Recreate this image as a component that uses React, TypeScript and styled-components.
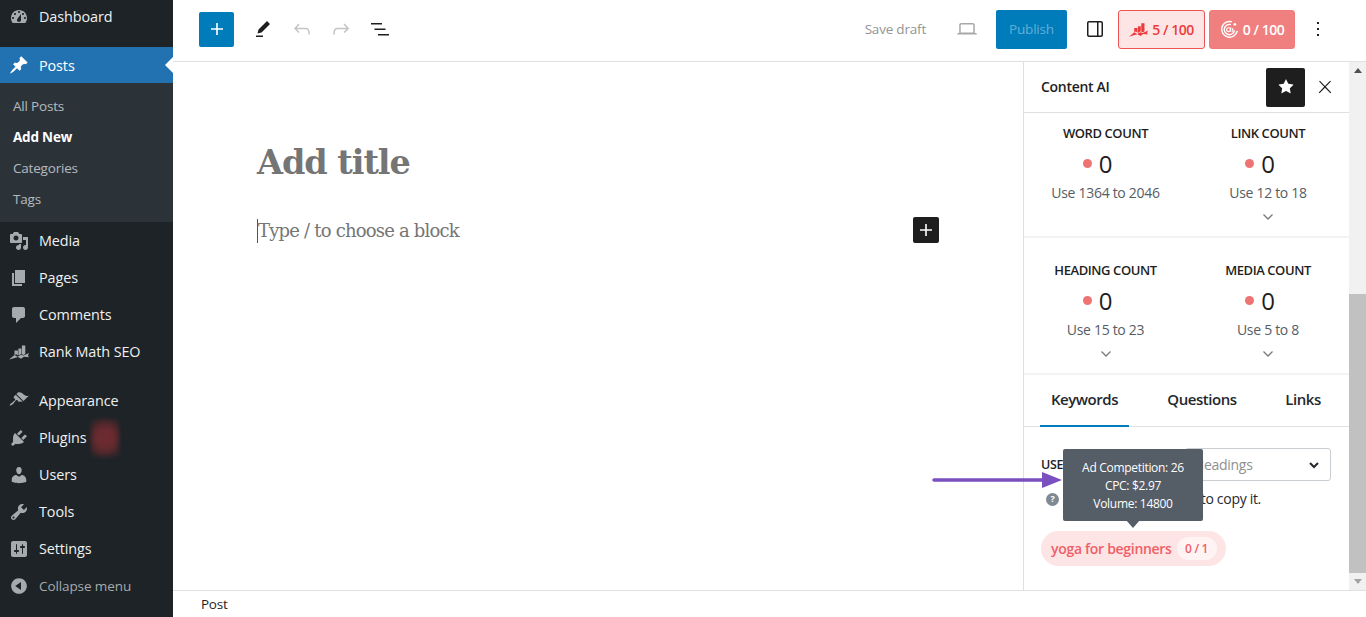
import React from 'react';
import styled, { createGlobalStyle } from 'styled-components';

const font = `'Open Sans', 'Noto Sans', sans-serif`;

const GlobalStyle = createGlobalStyle`
  html, body {
    margin: 0;
    height: 100%;
    overflow: hidden;
    background: #fff;
    font-family: ${font};
  }
  #root {
    height: 100%;
  }
  * {
    box-sizing: border-box;
  }
`;

const Page = styled.div`
  display: flex;
  width: 1366px;
  height: 617px;
  overflow: hidden;
  position: relative;
`;

/* admin menu */
const Sidebar = styled.nav`
  width: 173px;
  flex-shrink: 0;
  background: #1d2327;
  display: flex;
  flex-direction: column;
`;

const MenuItem = styled.div<{ $active?: boolean; $gap?: number; $muted?: boolean; $h?: number }>`
  display: flex;
  align-items: center;
  height: ${({ $h }) => $h ?? 37}px;
  margin-top: ${({ $gap }) => $gap ?? 0}px;
  padding-left: 9px;
  gap: 10px;
  position: relative;
  font-size: ${({ $muted }) => ($muted ? 13.5 : 14.4)}px;
  letter-spacing: -0.1px;
  color: ${({ $active, $muted }) => ($active ? '#fff' : $muted ? '#a7aaad' : '#f0f0f1')};
  background: ${({ $active }) => ($active ? '#2271b1' : 'transparent')};

  svg {
    width: 20px;
    height: 20px;
    fill: ${({ $active }) => ($active ? '#fff' : '#a7aaad')};
    flex-shrink: 0;
  }
`;

const ActiveNotch = styled.span`
  position: absolute;
  right: 0;
  top: 50%;
  margin-top: -8px;
  border: 8px solid transparent;
  border-left-width: 0;
  border-right-color: #fff;
`;

const SubMenu = styled.div`
  background: #2c3338;
  height: 139px;
  padding-top: 8px;
  display: flex;
  flex-direction: column;
`;

const SubItem = styled.div<{ $current?: boolean }>`
  height: 30.75px;
  display: flex;
  align-items: center;
  padding-left: 13px;
  font-size: 13.5px;
  letter-spacing: -0.2px;
  font-weight: ${({ $current }) => ($current ? 700 : 400)};
  color: ${({ $current }) => ($current ? '#fff' : 'rgba(240, 246, 252, 0.7)')};
`;

const BlurredBadge = styled.span`
  width: 28px;
  height: 38px;
  margin-left: -6px;
  background: radial-gradient(circle, #6b2b30 35%, #54282c 60%, #1d2327 100%);
  filter: blur(2px);
`;

/* editor */
const Main = styled.div`
  flex: 1;
  min-width: 0;
  display: flex;
  flex-direction: column;
`;

const TopBar = styled.header`
  height: 62px;
  flex-shrink: 0;
  border-bottom: 1px solid #e0e0e0;
  display: flex;
  align-items: center;
  padding: 0 29px 3px 26px;
`;

const InserterButton = styled.button`
  width: 35px;
  height: 35px;
  margin-right: 9px;
  border: none;
  border-radius: 2px;
  background: #007cba;
  padding: 0;
  display: flex;
  align-items: center;
  justify-content: center;

  svg {
    width: 24px;
    height: 24px;
    fill: #fff;
  }
`;

const IconButton = styled.button<{ $color?: string; $size?: number; $left?: number }>`
  width: 39px;
  height: 36px;
  margin-left: ${({ $left }) => $left ?? 0}px;
  border: none;
  background: none;
  padding: 0;
  display: flex;
  align-items: center;
  justify-content: center;

  svg {
    width: ${({ $size }) => $size ?? 24}px;
    height: ${({ $size }) => $size ?? 24}px;
    fill: ${({ $color }) => $color ?? '#1e1e1e'};
  }
`;

const RightTools = styled.div`
  margin-left: auto;
  display: flex;
  align-items: center;
`;

const SaveDraft = styled.span`
  font-size: 13.5px;
  letter-spacing: -0.2px;
  color: #949494;
  margin-right: 21px;
`;

const PublishButton = styled.button`
  width: 71px;
  height: 39px;
  margin: 0 8px 0 10px;
  border: none;
  border-radius: 2px;
  background: #007cba;
  color: rgba(255, 255, 255, 0.4);
  font-family: ${font};
  font-size: 13.5px;
  letter-spacing: -0.2px;
  padding: 0;
`;

const ScoreButton = styled.div<{ $filled?: boolean; $w: number }>`
  width: ${({ $w }) => $w}px;
  height: 39px;
  margin-left: 4px;
  border-radius: 3px;
  border: 1px solid ${({ $filled }) => ($filled ? '#ef7b7b' : '#ee5353')};
  background: ${({ $filled }) => ($filled ? '#f08080' : '#fde5e5')};
  color: ${({ $filled }) => ($filled ? '#fff' : '#ee3b3b')};
  font-size: 14px;
  font-weight: 600;
  letter-spacing: -0.45px;
  display: flex;
  align-items: center;
  justify-content: center;
  gap: 4px;
`;

const Body = styled.div`
  flex: 1;
  min-height: 0;
  display: flex;
`;

const Canvas = styled.div`
  flex: 1;
  min-width: 0;
  padding: 78px 84px 0 84px;
`;

const PostTitle = styled.h1`
  margin: 0;
  font-family: 'DejaVu Serif', 'Liberation Serif', serif;
  font-size: 33.5px;
  line-height: 46px;
  letter-spacing: -1.05px;
  font-weight: 700;
  color: #757575;
`;

const BlockRow = styled.div`
  display: flex;
  align-items: center;
  justify-content: space-between;
  margin-top: 31px;
`;

const Placeholder = styled.div`
  font-family: 'DejaVu Serif', 'Liberation Serif', serif;
  font-size: 18px;
  letter-spacing: -0.8px;
  color: #757575;
  border-left: 1px solid #555;
  line-height: 24px;
`;

const BlockAdd = styled.button`
  width: 26px;
  height: 26px;
  margin-bottom: 2px;
  border: none;
  border-radius: 2px;
  background: #1e1e1e;
  padding: 0;
  display: flex;
  align-items: center;
  justify-content: center;

  svg {
    width: 24px;
    height: 24px;
    fill: #fff;
  }
`;

/* content ai panel */
const Panel = styled.aside`
  width: 326px;
  flex-shrink: 0;
  border-left: 1px solid #e0e0e0;
  display: flex;
  flex-direction: column;
  position: relative;
`;

const PanelHeader = styled.div`
  height: 51px;
  flex-shrink: 0;
  border-bottom: 1px solid #e0e0e0;
  display: flex;
  align-items: center;
  padding: 0 5px 0 17px;
`;

const PanelTitle = styled.span`
  margin-bottom: 2px;
  font-size: 14px;
  font-weight: 600;
  letter-spacing: -0.3px;
  color: #1e1e1e;
`;

const StarButton = styled.button`
  width: 39px;
  height: 39px;
  margin-left: auto;
  border: none;
  border-radius: 2px;
  background: #1e1e1e;
  padding: 0;
  display: flex;
  align-items: center;
  justify-content: center;

  svg {
    width: 24px;
    height: 24px;
    fill: #fff;
  }
`;

const StatGrid = styled.div<{ $h: number; $top: number }>`
  height: ${({ $h }) => $h}px;
  flex-shrink: 0;
  padding-top: ${({ $top }) => $top}px;
  border-bottom: 2px solid #f3f3f3;
  display: grid;
  grid-template-columns: 163px 162px;
`;

const Stat = styled.div`
  display: flex;
  flex-direction: column;
  align-items: center;
`;

const StatLabel = styled.div`
  font-size: 13px;
  line-height: 18px;
  font-weight: 600;
  letter-spacing: -0.42px;
  color: #1e1e1e;
`;

const StatValue = styled.div`
  display: flex;
  align-items: center;
  gap: 7px;
  height: 26px;
  margin-top: 8px;
  padding-right: 16px;
  font-size: 24px;
  color: #1e1e1e;
`;

const Dot = styled.span`
  width: 9px;
  height: 9px;
  border-radius: 50%;
  background: #ef7373;
`;

const StatHint = styled.div`
  margin-top: 6.5px;
  font-size: 14px;
  line-height: 20px;
  letter-spacing: -0.3px;
  color: #555d66;
`;

const StatMore = styled.div`
  height: 14px;
  margin-top: 7px;

  svg {
    display: block;
    width: 14px;
    height: 14px;
    fill: none;
    stroke: #7a7a7a;
    stroke-width: 1.3;
  }
`;

const Tabs = styled.div`
  height: 52px;
  flex-shrink: 0;
  border-bottom: 1px solid #e0e0e0;
  display: flex;
  padding-left: 16px;
`;

const Tab = styled.div<{ $active?: boolean; $w: number }>`
  width: ${({ $w }) => $w}px;
  height: 52px;
  padding-bottom: 2px;
  display: flex;
  align-items: center;
  justify-content: center;
  font-size: 15px;
  font-weight: 600;
  letter-spacing: -0.45px;
  color: #23282d;
  border-bottom: 2px solid ${({ $active }) => ($active ? '#007cba' : 'transparent')};
`;

const KeywordPane = styled.div`
  padding: 21px 18px 0 17px;
`;

const FilterRow = styled.div`
  display: flex;
  align-items: center;
  justify-content: space-between;
  height: 33px;
`;

const FilterLabel = styled.span`
  font-size: 12.5px;
  font-weight: 600;
  letter-spacing: -0.3px;
  color: #1e1e1e;
`;

const FilterSelect = styled.div`
  width: 146px;
  height: 33px;
  border: 1px solid #c9ced3;
  border-radius: 3px;
  display: flex;
  align-items: center;
  justify-content: space-between;
  padding: 0 10px 0 8px;
  font-size: 14px;
  letter-spacing: -0.3px;
  color: #8f8f8f;

  svg {
    width: 12px;
    height: 12px;
    fill: none;
    stroke: #23282d;
    stroke-width: 2;
  }
`;

const HelpRow = styled.div`
  display: flex;
  align-items: center;
  justify-content: space-between;
  width: 220px;
  margin-top: 8px;
  padding-left: 5px;
  font-size: 14px;
  line-height: 20px;
  letter-spacing: -0.3px;
  color: #23282d;
  white-space: nowrap;
`;

const HelpIcon = styled.span`
  width: 13px;
  height: 13px;
  border-radius: 50%;
  background: #7e8993;
  color: #fff;
  font-size: 9px;
  font-weight: 700;
  display: flex;
  align-items: center;
  justify-content: center;
`;

const KeywordPill = styled.div`
  display: inline-flex;
  align-items: center;
  gap: 5px;
  height: 35px;
  margin-top: 22px;
  padding: 0 9px 0 10px;
  border-radius: 18px;
  background: #fde5e5;
  color: #ef5f67;
  font-size: 14px;
  font-weight: 600;
  letter-spacing: -0.3px;
`;

const KeywordCount = styled.span`
  width: 40px;
  height: 23px;
  border-radius: 12px;
  background: #fff3f3;
  font-size: 12px;
  display: flex;
  align-items: center;
  justify-content: center;
`;

const Tooltip = styled.div`
  position: absolute;
  left: 39px;
  top: 387px;
  width: 140px;
  height: 72px;
  border-radius: 2px;
  background: #555d66;
  color: #fff;
  font-size: 12px;
  line-height: 18px;
  letter-spacing: -0.3px;
  text-align: center;
  padding-top: 10px;

  &::after {
    content: '';
    position: absolute;
    left: 63px;
    bottom: -7px;
    border-style: solid;
    border-width: 8px 7px 0;
    border-color: #555d66 transparent transparent;
  }
`;

const Annotation = styled.svg`
  position: absolute;
  left: 932px;
  top: 470px;
  width: 132px;
  height: 20px;
`;

const Scrollbar = styled.div`
  width: 17px;
  flex-shrink: 0;
  background: #f1f1f1;
  display: flex;
  flex-direction: column;
`;

const ScrollArrow = styled.div<{ $down?: boolean }>`
  height: 17px;
  flex-shrink: 0;
  display: flex;
  align-items: center;
  justify-content: center;

  &::before {
    content: '';
    border-style: solid;
    border-width: ${({ $down }) => ($down ? '5px 4px 0' : '0 4px 5px')};
    border-color: ${({ $down }) =>
      $down ? '#a3a3a3 transparent transparent' : 'transparent transparent #505050'};
  }
`;

const ScrollTrack = styled.div`
  flex: 1;
  display: flex;
  flex-direction: column;
  justify-content: flex-end;
`;

const ScrollThumb = styled.div`
  height: 279px;
  background: #c1c1c1;
`;

const StatusBar = styled.footer`
  height: 27px;
  flex-shrink: 0;
  border-top: 1px solid #e0e0e0;
  display: flex;
  align-items: center;
  padding-left: 28px;
  font-size: 13.5px;
  letter-spacing: -0.25px;
  color: #1e1e1e;
`;

const Plus = () => (
  <svg viewBox="0 0 24 24"><path d="M18 11.2h-5.2V6h-1.6v5.2H6v1.6h5.2V18h1.6v-5.2H18z" /></svg>
);

const Chevron = () => (
  <svg viewBox="0 0 14 14"><path d="M2.5 4.5 7 9l4.5-4.5" /></svg>
);

const rankMathBase = 'M0 17.5 5.5 13l3 1.8 3.5-2 2.5.8 5.5-2.6-1 2.6 1 1.6-5-.4-3 2-3-1.8-5 1.4z';
const rankMathBars = 'M5.5 8.5h3.4v4.8L7 12.2l-1.5 1zM9.4 6.5h3v5.4l-3 1.7zM12.9 3.5h3.4v8.6l-1.7.8-1.7-.6z';

const RankMathIcon = () => (
  <svg viewBox="0 0 20 20">
    <path d={rankMathBase} />
    <path d={rankMathBars} />
  </svg>
);

const menuPaths: Record<string, string> = {
  dashboard:
    'M3.76 16h12.48c1.1-1.37 1.76-3.11 1.76-5 0-4.42-3.58-8-8-8s-8 3.58-8 8c0 1.89.66 3.63 1.76 5zM10 4c.55 0 1 .45 1 1s-.45 1-1 1-1-.45-1-1 .45-1 1-1zM6 6c.55 0 1 .45 1 1s-.45 1-1 1-1-.45-1-1 .45-1 1-1zm8 0c.55 0 1 .45 1 1s-.45 1-1 1-1-.45-1-1 .45-1 1-1zm-5.37 5.55L12 7v6c0 1.1-.9 2-2 2s-2-.9-2-2c0-.57.24-1.08.63-1.45zM4 10c.55 0 1 .45 1 1s-.45 1-1 1-1-.45-1-1 .45-1 1-1zm12 0c.55 0 1 .45 1 1s-.45 1-1 1-1-.45-1-1 .45-1 1-1z',
  posts:
    'M10.44 3.02l1.82-1.82 6.36 6.35-1.83 1.82c-1.05-.68-2.48-.57-3.41.36l-.75.75c-.92.93-1.04 2.35-.35 3.41l-1.83 1.82-2.41-2.41-2.8 2.79c-.42.42-3.38 2.71-3.8 2.29s1.86-3.39 2.28-3.81l2.79-2.79L4.1 9.36l1.83-1.82c1.05.69 2.48.57 3.4-.36l.75-.75c.93-.92 1.05-2.35.36-3.41z',
  media:
    'M13 11V4c0-.55-.45-1-1-1h-1.67L9 1H5L3.67 3H2c-.55 0-1 .45-1 1v7c0 .55.45 1 1 1h10c.55 0 1-.45 1-1zM7 4.5c1.38 0 2.5 1.12 2.5 2.5S8.38 9.5 7 9.5 4.5 8.38 4.5 7 5.62 4.5 7 4.5zM14 6h5v10.5c0 1.38-1.12 2.5-2.5 2.5S14 17.88 14 16.5s1.12-2.5 2.5-2.5c.17 0 .34.02.5.05V9h-3V6zm-4 8.05V13h2v3.5c0 1.38-1.12 2.5-2.5 2.5S7 17.88 7 16.5 8.12 14 9.5 14c.17 0 .34.02.5.05z',
  pages: 'M6 15V2h10v13H6zm-1 1h8v2H3V5h2v11z',
  comments:
    'M5 2h9c1.1 0 2 .9 2 2v7c0 1.1-.9 2-2 2h-2l-5 5v-5H5c-1.1 0-2-.9-2-2V4c0-1.1.9-2 2-2z',
  appearance:
    'M14.48 11.06L7.41 3.99l1.5-1.5c.5-.56 2.3-.47 3.51.32 1.21.8 1.43 1.28 2.91 2.1 1.18.64 2.45 1.26 4.45.85zm-.71.71L6.7 4.7 4.93 6.47c-.39.39-.39 1.02 0 1.41l1.06 1.06c.39.39.39 1.03 0 1.42-.6.6-1.43 1.11-2.21 1.69-.35.26-.7.53-1.01.84C1.43 13.23.4 14.85.94 15.39s2.16-.49 3.5-1.83c.31-.31.58-.66.84-1.01.58-.78 1.09-1.61 1.69-2.21.39-.39 1.02-.39 1.41 0l1.06 1.06c.39.39 1.02.39 1.41 0z',
  plugins:
    'M13.11 4.36L9.87 7.6 8 5.73l3.24-3.24c.35-.34 1.05-.2 1.56.32.52.51.66 1.21.31 1.55zm-8 1.77l.91-1.12 9.01 9.01-1.19.84c-.71.71-2.63 1.16-3.82 1.16H6.14L4.9 17.26c-.59.59-1.54.59-2.12 0-.59-.58-.59-1.53 0-2.12l1.24-1.24v-3.88c0-1.13.4-3.19 1.09-3.89zm7.26 3.97l3.24-3.24c.34-.35 1.04-.21 1.55.31.52.51.66 1.21.31 1.55l-3.24 3.25z',
  users:
    'M10 9.25c-2.27 0-2.73-3.44-2.73-3.44C7 4.02 7.82 2 9.97 2c2.16 0 2.98 2.02 2.71 3.81 0 0-.41 3.44-2.68 3.44zm0 2.57L12.72 10c2.39 0 4.52 2.33 4.52 4.53v2.49s-3.65 1.13-7.24 1.13c-3.65 0-7.24-1.13-7.24-1.13v-2.49c0-2.25 1.94-4.48 4.47-4.48z',
  tools:
    'M16.68 9.77c-1.34 1.34-3.3 1.67-4.95.99l-5.41 6.52c-.99.99-2.59.99-3.58 0s-.99-2.59 0-3.57l6.52-5.42c-.68-1.65-.35-3.61.99-4.95 1.28-1.28 3.12-1.62 4.72-1.06l-2.89 2.89 2.82 2.82 2.86-2.87c.53 1.58.18 3.39-1.08 4.65zM3.81 16.21c.4.39 1.04.39 1.43 0 .4-.4.4-1.04 0-1.43-.39-.4-1.03-.4-1.43 0-.39.39-.39 1.03 0 1.43z',
  settings:
    'M18 16V4c0-1.1-.9-2-2-2H4c-1.1 0-2 .9-2 2v12c0 1.1.9 2 2 2h12c1.1 0 2-.9 2-2zM8 11h1c.55 0 1 .45 1 1s-.45 1-1 1H8v1.5c0 .28-.22.5-.5.5s-.5-.22-.5-.5V13H6c-.55 0-1-.45-1-1s.45-1 1-1h1V5.5c0-.28.22-.5.5-.5s.5.22.5.5V11zm5-2h-1c-.55 0-1-.45-1-1s.45-1 1-1h1V5.5c0-.28.22-.5.5-.5s.5.22.5.5V7h1c.55 0 1 .45 1 1s-.45 1-1 1h-1v5.5c0 .28-.22.5-.5.5s-.5-.22-.5-.5V9z',
  collapse:
    'M10 2.16c4.33 0 7.84 3.51 7.84 7.84s-3.51 7.84-7.84 7.84S2.16 14.33 2.16 10 5.71 2.16 10 2.16zm2 11.72V6.12L6.18 9.97z',
};

const MenuIcon = ({ name }: { name: string }) => (
  <svg viewBox="0 0 20 20"><path d={menuPaths[name]} /></svg>
);

const stats = [
  [
    { label: 'WORD COUNT', hint: 'Use 1364 to 2046', more: false },
    { label: 'LINK COUNT', hint: 'Use 12 to 18', more: true },
  ],
  [
    { label: 'HEADING COUNT', hint: 'Use 15 to 23', more: true },
    { label: 'MEDIA COUNT', hint: 'Use 5 to 8', more: true },
  ],
];

export default function App() {
  return (
    <Page>
      <GlobalStyle />
      <Sidebar>
        <MenuItem $h={33}><MenuIcon name="dashboard" />Dashboard</MenuItem>
        <MenuItem $active $gap={14} $h={36}>
          <MenuIcon name="posts" />Posts<ActiveNotch />
        </MenuItem>
        <SubMenu>
          <SubItem>All Posts</SubItem>
          <SubItem $current>Add New</SubItem>
          <SubItem>Categories</SubItem>
          <SubItem>Tags</SubItem>
        </SubMenu>
        <MenuItem><MenuIcon name="media" />Media</MenuItem>
        <MenuItem><MenuIcon name="pages" />Pages</MenuItem>
        <MenuItem><MenuIcon name="comments" />Comments</MenuItem>
        <MenuItem><RankMathIcon />Rank Math SEO</MenuItem>
        <MenuItem $gap={11} $h={38}><MenuIcon name="appearance" />Appearance</MenuItem>
        <MenuItem>
          <MenuIcon name="plugins" />Plugins<BlurredBadge />
        </MenuItem>
        <MenuItem><MenuIcon name="users" />Users</MenuItem>
        <MenuItem><MenuIcon name="tools" />Tools</MenuItem>
        <MenuItem><MenuIcon name="settings" />Settings</MenuItem>
        <MenuItem $muted><MenuIcon name="collapse" />Collapse menu</MenuItem>
      </Sidebar>

      <Main>
        <TopBar>
          <InserterButton><Plus /></InserterButton>
          <IconButton>
            <svg viewBox="0 0 24 24"><path d="m19 7-3-3-8.5 8.5-1 4 4-1L19 7Zm-7 11.5H5V20h7v-1.5Z" /></svg>
          </IconButton>
          <IconButton $color="#c4c4c4">
            <svg viewBox="0 0 24 24"><path d="M18.3 11.7c-.6-.6-1.4-.9-2.3-.9H6.7l2.9-3.3-1.1-1-4.5 5L8.5 16l1-1-2.7-2.7H16c.5 0 .9.2 1.3.5 1 1 1 3.4 1 4.5v.3h1.5v-.2c0-1.5 0-4.3-1.5-5.7z" /></svg>
          </IconButton>
          <IconButton $color="#c4c4c4">
            <svg viewBox="0 0 24 24"><path d="M15.6 6.5l-1.1 1 2.9 3.3H8c-.9 0-1.7.3-2.3.9-1.4 1.5-1.4 4.2-1.4 5.6v.2h1.5v-.3c0-1.1 0-3.5 1-4.5.3-.3.7-.5 1.3-.5h9.2L14.5 15l1.1 1.1 4.6-4.6-4.6-5z" /></svg>
          </IconButton>
          <IconButton>
            <svg viewBox="0 0 24 24"><path d="M3 6h11v1.5H3V6Zm3.5 5.5h11V13h-11v-1.5ZM21 17H10v1.5h11V17Z" /></svg>
          </IconButton>

          <RightTools>
            <SaveDraft>Save draft</SaveDraft>
            <IconButton $color="#a8a8a8">
              <svg viewBox="0 0 24 24"><path d="M20.5 16h-.7V8c0-1.1-.9-2-2-2H6.2c-1.1 0-2 .9-2 2v8h-.7c-.8 0-1.5.7-1.5 1.5h20c0-.8-.7-1.5-1.5-1.5zM5.7 8c0-.3.2-.5.5-.5h11.6c.3 0 .5.2.5.5v7.6H5.7V8z" /></svg>
            </IconButton>
            <PublishButton>Publish</PublishButton>
            <IconButton>
              <svg viewBox="0 0 24 24"><path d="M18 4H6c-1.1 0-2 .9-2 2v12c0 1.1.9 2 2 2h12c1.1 0 2-.9 2-2V6c0-1.1-.9-2-2-2zm-4 14.5H6c-.3 0-.5-.2-.5-.5V6c0-.3.2-.5.5-.5h8v13zm4.5-.5c0 .3-.2.5-.5.5h-2.5v-13H18c.3 0 .5.2.5.5v12z" /></svg>
            </IconButton>
            <ScoreButton $w={87}>
              <svg viewBox="0 0 20 20" width="19" height="19" fill="#ee3b3b">
                <path d={rankMathBase} />
                <path d={rankMathBars} />
              </svg>
              5 / 100
            </ScoreButton>
            <ScoreButton $filled $w={86}>
              <svg viewBox="0 0 20 20" width="19" height="19" fill="none" stroke="#fff" strokeWidth="1.5">
                <path d="M12.5 1.9A8.3 8.3 0 1 0 18.2 11.5" />
                <path d="M11.5 4.9a5.4 5.4 0 1 0 3.7 6" />
                <circle cx="9" cy="10.2" r="2" strokeWidth="1.2" />
                <path d="M11.3 8v4.4M13.4 8.8v3.6" strokeWidth="1.2" />
                <circle cx="15.6" cy="4.6" r="1.4" fill="#fff" stroke="none" />
              </svg>
              0 / 100
            </ScoreButton>
            <IconButton $left={3}>
              <svg viewBox="0 0 24 24"><path d="M13 19h-2v-2h2v2zm0-6h-2v-2h2v2zm0-6h-2V5h2v2z" /></svg>
            </IconButton>
          </RightTools>
        </TopBar>

        <Body>
          <Canvas>
            <PostTitle>Add title</PostTitle>
            <BlockRow>
              <Placeholder>Type / to choose a block</Placeholder>
              <BlockAdd><Plus /></BlockAdd>
            </BlockRow>
          </Canvas>

          <Panel>
            <PanelHeader>
              <PanelTitle>Content AI</PanelTitle>
              <StarButton>
                <svg viewBox="0 0 24 24"><path d="M11.776 4.454a.25.25 0 01.448 0l2.069 4.192a.25.25 0 00.188.137l4.626.672a.25.25 0 01.139.426l-3.348 3.263a.25.25 0 00-.072.222l.79 4.607a.25.25 0 01-.362.263l-4.138-2.175a.25.25 0 00-.232 0l-4.138 2.175a.25.25 0 01-.363-.263l.79-4.607a.25.25 0 00-.071-.222L4.754 9.881a.25.25 0 01.139-.426l4.626-.672a.25.25 0 00.188-.137l2.069-4.192z" /></svg>
              </StarButton>
              <IconButton $size={20}>
                <svg viewBox="0 0 24 24"><path d="M13 11.8l6.1-6.3-1-1-6.1 6.2-6.1-6.2-1 1 6.1 6.3-6.5 6.7 1 1 6.5-6.6 6.5 6.6 1-1z" /></svg>
              </IconButton>
            </PanelHeader>

            {stats.map((row, i) => (
              <StatGrid key={i} $h={i === 0 ? 125 : 137} $top={i === 0 ? 11 : 23}>
                {row.map(stat => (
                  <Stat key={stat.label}>
                    <StatLabel>{stat.label}</StatLabel>
                    <StatValue><Dot />0</StatValue>
                    <StatHint>{stat.hint}</StatHint>
                    {stat.more && <StatMore><Chevron /></StatMore>}
                  </Stat>
                ))}
              </StatGrid>
            ))}

            <Tabs>
              <Tab $active $w={89}>Keywords</Tab>
              <Tab $w={146}>Questions</Tab>
              <Tab $w={56}>Links</Tab>
            </Tabs>

            <KeywordPane>
              <FilterRow>
                <FilterLabel>USE</FilterLabel>
                <FilterSelect>
                  Headings
                  <svg viewBox="0 0 12 12"><path d="M2 4l4 4 4-4" /></svg>
                </FilterSelect>
              </FilterRow>
              <HelpRow>
                <HelpIcon>?</HelpIcon>
                to copy it.
              </HelpRow>
              <KeywordPill>
                yoga for beginners
                <KeywordCount>0 / 1</KeywordCount>
              </KeywordPill>
            </KeywordPane>

            <Tooltip>
              Ad Competition: 26<br />
              CPC: $2.97<br />
              Volume: 14800
            </Tooltip>
          </Panel>

          <Scrollbar>
            <ScrollArrow />
            <ScrollTrack><ScrollThumb /></ScrollTrack>
            <ScrollArrow $down />
          </Scrollbar>
        </Body>

        <StatusBar>Post</StatusBar>
      </Main>

      <Annotation viewBox="0 0 132 20">
        <path d="M2 10h110" stroke="#7a4fbf" strokeWidth="3.5" strokeLinecap="round" />
        <path d="M110 2l20 8-20 8z" fill="#7a4fbf" />
      </Annotation>
    </Page>
  );
}
